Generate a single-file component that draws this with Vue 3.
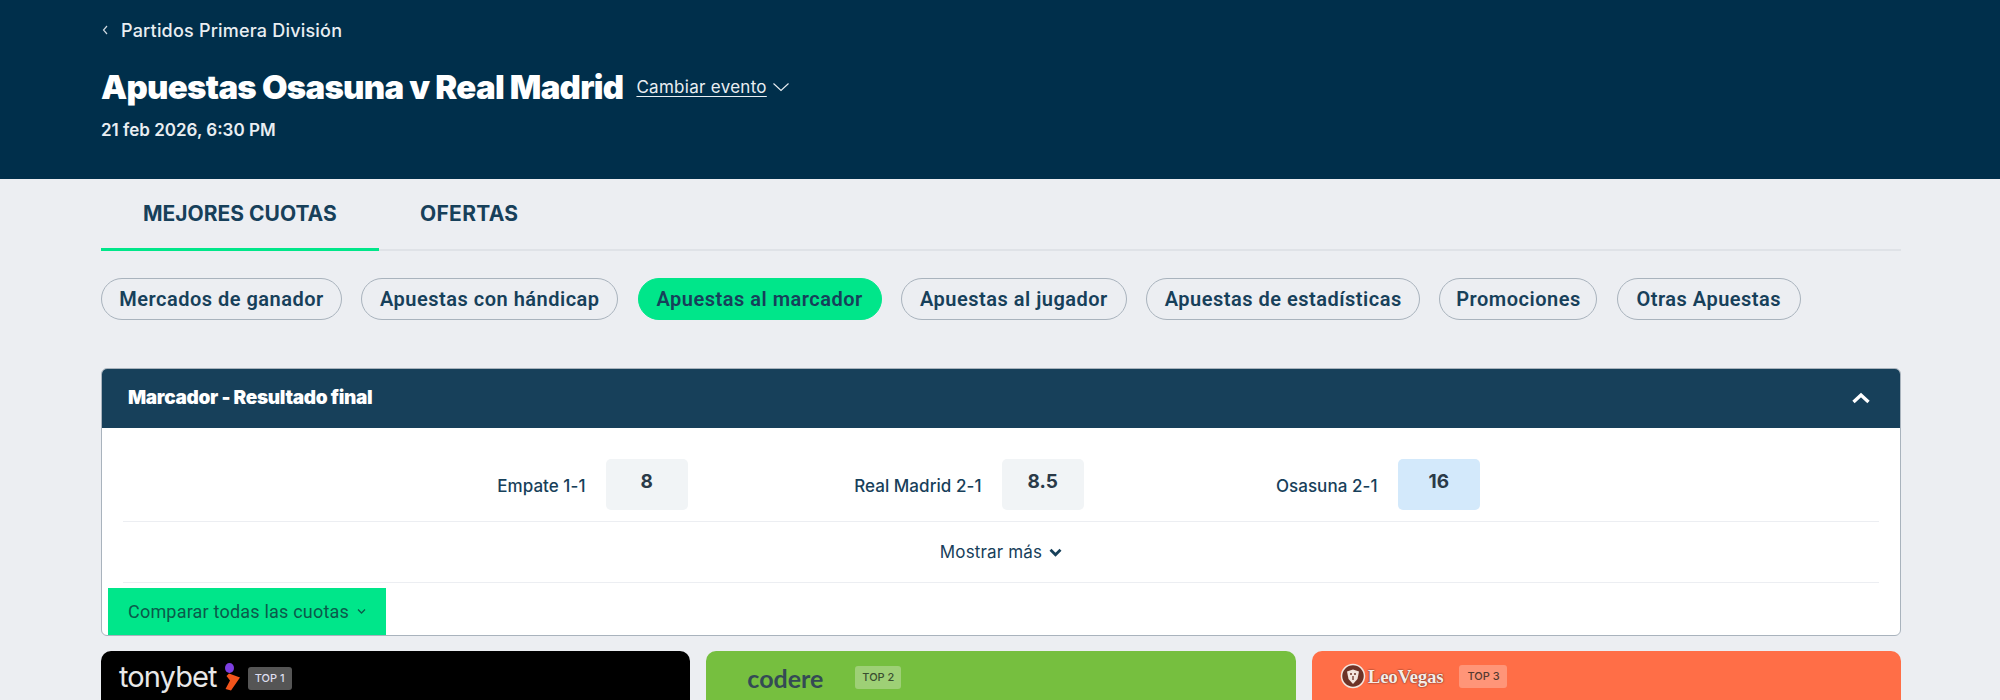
<script setup>
const pills = [
  { label: 'Mercados de ganador', w: 241 },
  { label: 'Apuestas con hándicap', w: 257 },
  { label: 'Apuestas al marcador', w: 244, active: true },
  { label: 'Apuestas al jugador', w: 226 },
  { label: 'Apuestas de estadísticas', w: 274 },
  { label: 'Promociones', w: 158 },
  { label: 'Otras Apuestas', w: 184 }
]
const odds = [
  { label: 'Empate 1-1', value: '8' },
  { label: 'Real Madrid 2-1', value: '8.5' },
  { label: 'Osasuna 2-1', value: '16', hot: true }
]
</script>

<template>
  <div class="page">
    <header class="hero">
      <div class="wrap">
        <a class="back">
          <svg class="back-ic" width="8" height="12" viewBox="0 0 8 12"><path d="M6 2 2.5 6 6 10" fill="none" stroke="#cfd8df" stroke-width="1.2"/></svg>
          <span>Partidos Primera División</span>
        </a>
        <div class="title-row">
          <h1>Apuestas Osasuna v Real Madrid</h1>
          <a class="change">Cambiar evento</a>
          <svg width="18" height="10" viewBox="0 0 18 10"><path d="M1.500 1.500 9 8.500l7.500-7" fill="none" stroke="#e9eef2" stroke-width="1.100"/></svg>
        </div>
        <div class="date">21 feb 2026, 6:30 PM</div>
      </div>
    </header>

    <main class="wrap">
      <nav class="tabs">
        <a class="tab tab-on">MEJORES CUOTAS</a>
        <a class="tab tab-off">OFERTAS</a>
      </nav>

      <div class="pills">
        <button v-for="p in pills" :key="p.label" class="pill" :class="{ 'pill-on': p.active }" :style="{ width: p.w + 'px' }">{{ p.label }}</button>
      </div>

      <section class="card">
        <div class="card-head">
          <span class="card-title">Marcador - Resultado final</span>
          <svg width="20" height="12" viewBox="0 0 20 12"><path d="M2.500 10 10 3l7.500 7" fill="none" stroke="#fff" stroke-width="3.400"/></svg>
        </div>
        <div class="card-body">
          <div class="odds">
            <div v-for="o in odds" :key="o.label" class="odd">
              <span class="odd-label">{{ o.label }}</span>
              <span class="odd-box" :class="{ 'odd-hot': o.hot }">{{ o.value }}</span>
            </div>
          </div>
          <div class="more">
            Mostrar más
            <svg width="13" height="9" viewBox="0 0 13 9"><path d="M1.500 1.800 6.500 6.800l5-5" fill="none" stroke="#17405a" stroke-width="2.800"/></svg>
          </div>
          <button class="compare">
            Comparar todas las cuotas
            <svg width="9" height="7" viewBox="0 0 9 7"><path d="M1 1.500 4.500 5 8 1.500" fill="none" stroke="#0b5a4a" stroke-width="1.300"/></svg>
          </button>
        </div>
      </section>

      <div class="books">
        <div class="book book-tony">
          <span class="logo-tony">tonybet</span>
          <svg class="tony-mark" width="17" height="28" viewBox="0 0 17 28">
            <ellipse cx="5.500" cy="5" rx="4.500" ry="5" fill="#7d3fe0"/>
            <path d="M5 10.500 16 14.500 7 27.500 1.500 26 6 17.500 2.500 13z" fill="#f2541b"/>
          </svg>
          <span class="tag tag-tony">TOP 1</span>
        </div>
        <div class="book book-codere">
          <span class="logo-codere">codere</span>
          <span class="tag tag-codere">TOP 2</span>
        </div>
        <div class="book book-leo">
          <svg class="leo-mark" width="26" height="26" viewBox="0 0 26 26">
            <circle cx="13" cy="13" r="11.500" fill="#6d3327" stroke="#f3e6df" stroke-width="1.500"/>
            <path d="M7 8.500 13 6.500 19 8.500 17.500 16 13 21 8.500 16z" fill="#f3e6df"/>
            <path d="M10 11h2M14 11h2M13 13v4" stroke="#6d3327" stroke-width="1.300" fill="none"/>
          </svg>
          <span class="logo-leo">LeoVegas</span>
          <span class="tag tag-leo">TOP 3</span>
        </div>
      </div>
    </main>
  </div>
</template>

<style>
html, body { margin: 0; background: #eceef2; }
</style>

<style scoped>
.page {
  height: 700px;
  overflow: hidden;
  background: #eceef2;
  font-family: Inter, "Liberation Sans", sans-serif;
  color: #17405a;
}
.wrap {
  width: 1800px;
  margin-left: 101px;
}
.hero {
  height: 179px;
  background: #002f4b;
  color: #fff;
  box-sizing: border-box;
  padding-top: 19px;
}
.back {
  display: flex;
  align-items: center;
  height: 22px;
  font-size: 18px;
  font-weight: 500;
  letter-spacing: 0.2px;
  color: #e9eef2;
}
.back-ic { margin-right: 12px; }
.title-row {
  display: flex;
  align-items: center;
  margin-top: 22px;
  height: 48px;
}
h1 {
  margin: 0;
  font-size: 33px;
  font-weight: 900;
  letter-spacing: -0.72px;
  white-space: nowrap;
}
.change {
  margin-left: 13px;
  margin-right: 5px;
  font-size: 17px;
  letter-spacing: 0.28px;
  text-decoration: underline;
  text-underline-offset: 3px;
  color: #e9eef2;
}
.date {
  margin-top: 9px;
  font-size: 17px;
  font-weight: 600;
  color: #e9eef2;
}
.tabs {
  display: flex;
  height: 72px;
  border-bottom: 2px solid #dfe2e7;
  box-sizing: border-box;
}
.tab {
  box-sizing: border-box;
  height: 72px;
  padding: 22px 42px 0;
  font-size: 21px;
  font-weight: 700;
  color: #17405a;
}
.tab-on {
  width: 278px;
  border-bottom: 3px solid #00e68a;
}
.tab-off {
  padding-left: 41px;
  letter-spacing: 0.3px;
}
.pills {
  display: flex;
  gap: 19.3px;
  margin-top: 27px;
}
.pill {
  box-sizing: border-box;
  height: 42px;
  padding: 0;
  border: 1.500px solid #a9b3bd;
  border-radius: 21px;
  background: #eceef2;
  font: 600 20px Roboto, sans-serif;
  letter-spacing: 0.5px;
  color: #17405a;
}
.pill-on {
  background: #00e68a;
  border-color: #00e68a;
}
.card {
  margin-top: 48px;
  height: 268px;
  box-sizing: border-box;
  border: 1px solid #a9b3bd;
  border-radius: 6px;
  background: #fff;
  overflow: hidden;
}
.card-head {
  display: flex;
  align-items: center;
  justify-content: space-between;
  height: 60px;
  padding: 0 30px 0 27px;
  margin: -1px -1px 0;
  background: #17405a;
  color: #fff;
  font-size: 19px;
  font-weight: 900;
  letter-spacing: -0.32px;
}
.card-title { margin-top: -2px; }
.card-body {
  display: flex;
  flex-direction: column;
}
.odds {
  display: grid;
  grid-template-columns: 565px 396px 396px;
  margin: 0 21px;
  padding-top: 31px;
  height: 94px;
  box-sizing: border-box;
  border-bottom: 1px solid #eceef2;
}
.odd {
  display: flex;
  justify-content: flex-end;
  align-items: flex-start;
  gap: 20px;
}
.odd-label {
  margin-top: 17px;
  font-size: 17px;
  font-weight: 500;
  letter-spacing: 0.05px;
}
.odd-box {
  width: 82.5px;
  height: 51px;
  box-sizing: border-box;
  padding-top: 11px;
  border-radius: 5px;
  background: #f1f4f6;
  text-align: center;
  font-size: 19px;
  font-weight: 700;
  color: #2a3a48;
}
.odd-hot { background: #d3e9fb; }
.more {
  margin: 0 21px;
  height: 61px;
  display: flex;
  justify-content: center;
  align-items: center;
  gap: 7px;
  border-bottom: 1px solid #eceef2;
  box-sizing: border-box;
  font-size: 17px;
  letter-spacing: 0.15px;
}
.compare {
  align-self: flex-start;
  display: flex;
  align-items: center;
  gap: 8px;
  box-sizing: border-box;
  width: 278px;
  height: 47px;
  margin: 5px 0 0 6px;
  padding: 0 0 0 20px;
  border: 0;
  background: #00e68a;
  font: 400 18px Roboto, sans-serif;
  letter-spacing: 0.2px;
  color: #0b5a4a;
}
.books {
  display: grid;
  grid-template-columns: repeat(3, 1fr);
  gap: 16px;
  margin-top: 15px;
}
.book {
  display: flex;
  align-items: flex-start;
  height: 60px;
  border-radius: 10px 10px 0 0;
  box-sizing: border-box;
}
.book-tony { background: #000; padding: 8px 0 0 18px; color: #fff; }
.book-codere { background: #76bf3f; padding: 14px 0 0 41px; }
.book-leo { background: #ff6e47; padding: 12px 0 0 28px; }
.logo-tony {
  font-size: 29px;
  line-height: 36px;
  letter-spacing: -0.9px;
  color: #e8e8e8;
}
.tony-mark { margin: 4px 0 0 7px; }
.logo-codere {
  font: 700 25px/26px Lato, sans-serif;
  color: #344a55;
}
.logo-leo {
  margin-left: 2px;
  font: 700 19px/28px "Liberation Serif", serif;
  letter-spacing: -0.2px;
  color: #f7ece6;
  text-shadow: 0 0 2px #6d3327, 0 0 1px #6d3327;
}
.tag {
  box-sizing: border-box;
  height: 23px;
  border-radius: 3px;
  text-align: center;
  font: 500 11px/23px Inter, sans-serif;
}
.tag-tony { width: 44px; margin: 8px 0 0 7px; background: #555; color: #dde; }
.tag-codere { width: 46px; margin: 1px 0 0 32px; background: #9ed076; color: #3a4f30; }
.tag-leo { width: 48px; margin: 2px 0 0 16px; background: #ff9578; color: #553a30; }
</style>
